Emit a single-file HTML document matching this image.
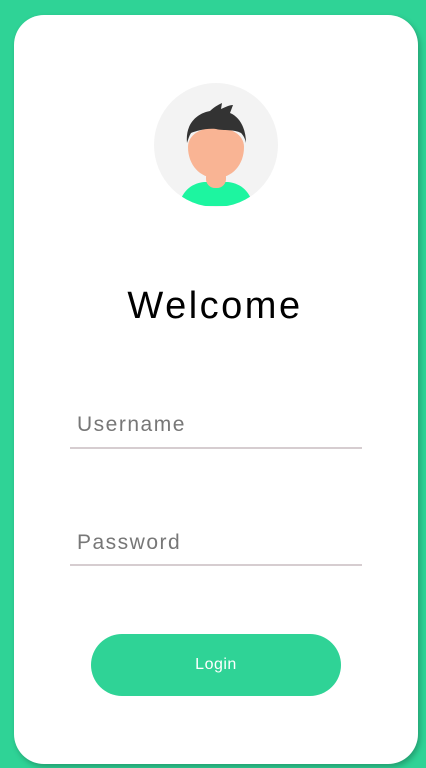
<!DOCTYPE html>
<html><head><meta charset="utf-8"><style>
html,body{margin:0;padding:0;}
body{width:426px;height:768px;background:#2fd396;position:relative;overflow:hidden;font-family:"Liberation Sans",sans-serif;}
.card{position:absolute;left:14px;top:15px;width:404px;height:749px;background:#fff;border-radius:30px;box-shadow:2px 3px 6px rgba(0,0,0,0.25);}
.welcome{position:absolute;left:2px;width:426px;top:285px;text-align:center;font-size:38px;letter-spacing:2.5px;color:#000;}
.ph{position:absolute;left:77px;font-size:21px;letter-spacing:1.5px;color:#777;}
.line{position:absolute;left:70px;width:292px;height:2px;background:#d6cdd0;}
.btn{position:absolute;left:91px;top:634px;width:250px;height:62px;border-radius:31px;background:#2fd396;color:#fff;text-align:center;line-height:62px;font-size:16px;letter-spacing:.5px;}
</style></head><body>
<div class="card"></div>
<svg style="position:absolute;left:154px;top:83px" width="124" height="124" viewBox="0 0 124 124">
<defs><clipPath id="c"><circle cx="62" cy="62" r="62"/></clipPath></defs>
<circle cx="62" cy="62" r="62" fill="#f3f3f3"/>
<g clip-path="url(#c)">
<path d="M25 123 C28 106 40 100 50 99 L74 99 C84 100 96 106 99 123 Z" fill="#1df5a0"/>
<rect x="52" y="85" width="20" height="20" rx="9" fill="#f9b494"/>
<path d="M34 64 C34 38 90 38 90 64 C90 82 78 95 62 95 C46 95 34 82 34 64 Z" fill="#f9b494"/>
<path d="M33 60 C31 40 44 30 56 28 C60 24 64 22 68 20 L67 26 C72 24 75 22 79 22 L76 30 C86 34 92 46 92 60 C91 55 89 52 87 50 C80 46 70 48 62 46 C52 45 42 48 37 50 C35 53 34 57 33 60 Z" fill="#333"/>
</g></svg>
<div class="welcome">Welcome</div>
<div class="ph" style="top:413px">Username</div>
<div class="line" style="top:447px"></div>
<div class="ph" style="top:531px">Password</div>
<div class="line" style="top:564px"></div>
<div class="btn">Login</div>
</body></html>
